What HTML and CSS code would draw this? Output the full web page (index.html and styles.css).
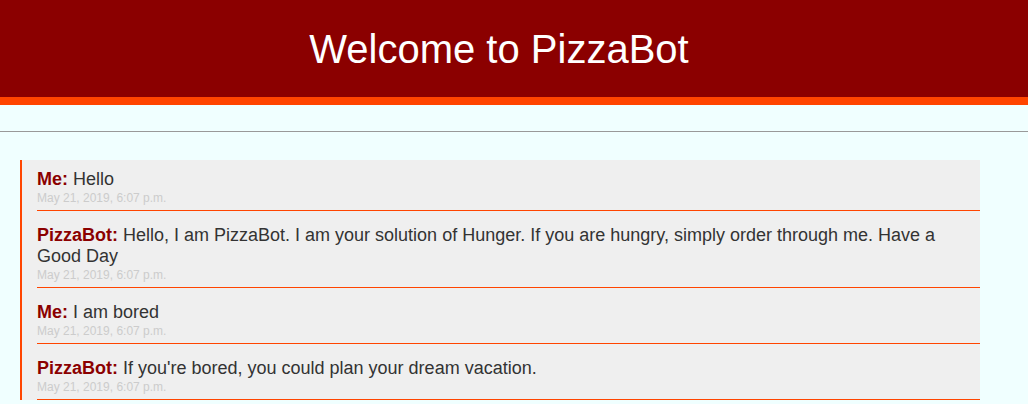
FILE: index.html
```html
<!DOCTYPE html>
<html lang="en">
<head>
<meta charset="utf-8">
<title>PizzaBot</title>
<link rel="stylesheet" href="styles.css">
</head>
<body>
<header class="header">
  <h1 class="title">Welcome to PizzaBot</h1>
</header>
<hr class="divider">
<section class="chat">
  <div class="msg">
    <div class="line"><span class="who">Me:</span> Hello</div>
    <div class="time">May 21, 2019, 6:07 p.m.</div>
  </div>
  <div class="msg">
    <div class="line"><span class="who">PizzaBot:</span> Hello, I am PizzaBot. I am your solution of Hunger. If you are hungry, simply order through me. Have a Good Day</div>
    <div class="time">May 21, 2019, 6:07 p.m.</div>
  </div>
  <div class="msg">
    <div class="line"><span class="who">Me:</span> I am bored</div>
    <div class="time">May 21, 2019, 6:07 p.m.</div>
  </div>
  <div class="msg">
    <div class="line"><span class="who">PizzaBot:</span> If you're bored, you could plan your dream vacation.</div>
    <div class="time">May 21, 2019, 6:07 p.m.</div>
  </div>
</section>
</body>
</html>
```

FILE: styles.css
```css
html, body {
  margin: 0;
  padding: 0;
}

body {
  background: #f0ffff;
  font-family: "Liberation Sans", Arial, sans-serif;
  overflow: hidden;
}

.header {
  background: #8b0000;
  border-bottom: 8px solid #ff4500;
  padding: 26px 30px 25px 0;
}

.title {
  margin: 0;
  color: #ffffff;
  font-size: 40px;
  font-weight: normal;
  line-height: 46px;
  text-align: center;
}

.divider {
  margin: 26px 0 0;
  border: 0;
  border-top: 1px solid #999999;
  height: 0;
}

.chat {
  box-sizing: border-box;
  width: 960px;
  margin: 28px 0 0 20px;
  background: #efefef;
  border-left: 2px solid #ff4500;
  padding: 9px 0 0 15px;
}

.msg {
  padding: 0 0 5px;
  border-bottom: 1px solid #ff4500;
}

.msg + .msg {
  padding-top: 14px;
}

.line {
  font-size: 18px;
  color: #333333;
}

.who {
  color: #8b0000;
  font-weight: bold;
}

.time {
  margin-top: 1px;
  font-size: 12px;
  color: #cccccc;
}
```
